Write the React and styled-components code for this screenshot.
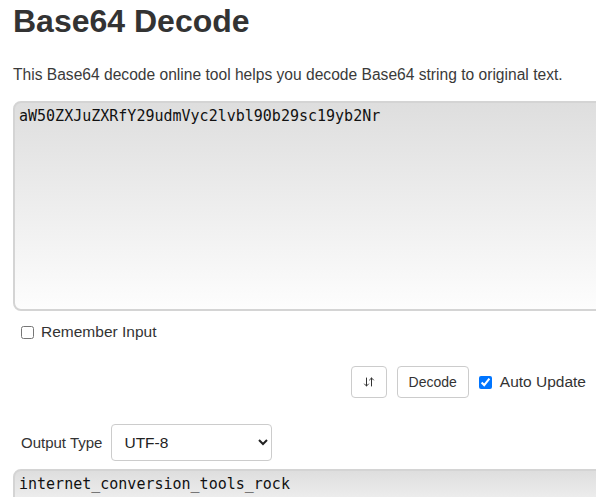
import React, { useState } from "react";
import styled, { createGlobalStyle } from "styled-components";
import { ArrowDownUp } from "lucide-react";

const GlobalStyle = createGlobalStyle`
  html, body {
    margin: 0;
    padding: 0;
    overflow: hidden;
    background: #fff;
    font-family: "Liberation Sans", Arial, sans-serif;
    color: #333;
  }
`;

const Page = styled.div`
  width: 640px;
  padding: 0 0 0 13px;
  box-sizing: border-box;
`;

const Title = styled.h1`
  margin: 0;
  padding-top: 3px;
  font-size: 32px;
  line-height: 36px;
  font-weight: bold;
  color: #333;
`;

const Intro = styled.p`
  margin: 26px 0 0;
  font-size: 15.6px;
  line-height: 20px;
  color: #3a3a3a;
`;

const Area = styled.textarea`
  display: block;
  width: 640px;
  height: ${(p) => p.$height}px;
  margin-top: ${(p) => p.$top}px;
  box-sizing: border-box;
  padding: 3px 4px;
  border: 2px solid #d4d4d4;
  border-radius: 8px;
  background: linear-gradient(#dedede, #fdfdfd);
  font-family: "DejaVu Sans Mono", "Liberation Mono", monospace;
  font-size: 15px;
  line-height: 20px;
  color: #111;
  resize: none;
  outline: none;
`;

const CheckRow = styled.label`
  display: flex;
  align-items: center;
  gap: 7px;
  margin: 12px 0 0 8px;
  font-size: 15.5px;
  color: #333;
`;

const Check = styled.input`
  width: 13px;
  height: 13px;
  margin: 0;
`;

const Actions = styled.div`
  display: flex;
  align-items: center;
  justify-content: flex-end;
  gap: 10px;
  width: 573px;
  margin-top: 25px;
`;

const Button = styled.button`
  height: 32px;
  padding: 0 11px;
  border: 1px solid #ccc;
  border-radius: 4px;
  background: #fff;
  font-family: "Liberation Sans", Arial, sans-serif;
  font-size: 14px;
  color: #333;
  display: flex;
  align-items: center;
`;

const AutoLabel = styled.label`
  display: flex;
  align-items: center;
  gap: 8px;
  font-size: 15.5px;
  color: #333;
`;

const OutputRow = styled.div`
  display: flex;
  align-items: center;
  gap: 9px;
  margin: 26px 0 0 8px;
  font-size: 15px;
  color: #333;
`;

const Select = styled.select`
  width: 161px;
  height: 37px;
  padding: 0 8px;
  border: 1px solid #ccc;
  border-radius: 4px;
  background: #fff;
  font-family: "Liberation Sans", Arial, sans-serif;
  font-size: 15.5px;
  color: #222;
`;

export default function App() {
  const [input, setInput] = useState("aW50ZXJuZXRfY29udmVyc2lvbl90b29sc19yb2Nr");
  return (
    <Page>
      <GlobalStyle />
      <Title>Base64 Decode</Title>
      <Intro>This Base64 decode online tool helps you decode Base64 string to original text.</Intro>
      <Area $top={16} $height={210} value={input} onChange={(e) => setInput(e.target.value)} />
      <CheckRow>
        <Check type="checkbox" />
        Remember Input
      </CheckRow>
      <Actions>
        <Button>
          <ArrowDownUp size={12} strokeWidth={2} />
        </Button>
        <Button>Decode</Button>
        <AutoLabel>
          <Check type="checkbox" defaultChecked />
          Auto Update
        </AutoLabel>
      </Actions>
      <OutputRow>
        Output Type
        <Select defaultValue="UTF-8">
          <option>UTF-8</option>
          <option>ASCII</option>
        </Select>
      </OutputRow>
      <Area $top={8} $height={60} readOnly value="internet_conversion_tools_rock" />
    </Page>
  );
}
